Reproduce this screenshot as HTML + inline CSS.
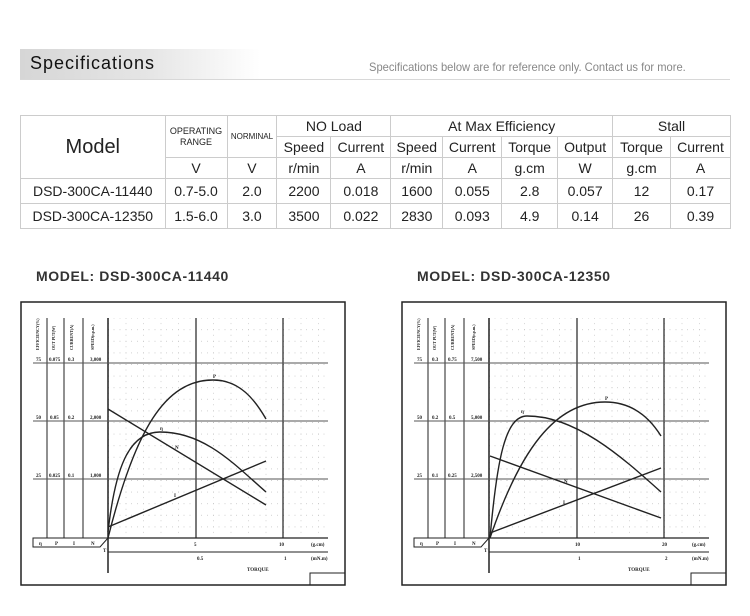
<!DOCTYPE html>
<html><head><meta charset="utf-8">
<style>
*{margin:0;padding:0;box-sizing:border-box}
body{width:750px;height:616px;background:#fff;font-family:"Liberation Sans",Arial,sans-serif;position:relative;overflow:hidden;color:#222}
.bar{position:absolute;left:20px;top:49px;width:240px;height:30px;background:linear-gradient(90deg,#d6d6d6 0%,#e6e6e6 55%,#fff 100%)}
.bar span{position:absolute;left:10px;top:4px;font-size:18px;letter-spacing:1px;color:#111}
.line{position:absolute;left:20px;top:79px;width:710px;height:1px;background:#d8d8d8}
.note{position:absolute;left:369px;top:60px;font-size:12px;color:#888;transform:scaleX(0.93);transform-origin:left}
table{position:absolute;left:20px;top:115px;border-collapse:collapse;width:711px}
td{border:1px solid #ccc;text-align:center;font-size:14px;color:#222;padding:0;height:21px;line-height:19px}
td.sm{font-size:9px;line-height:11px}
tr.d td{height:25px}
.t{position:absolute;font-size:14px;font-weight:bold;color:#333;letter-spacing:0.6px}
svg{position:absolute;left:0;top:0}
</style></head><body>
<div class="bar"><span>Specifications</span></div>
<div class="line"></div>
<div class="note">Specifications below are for reference only. Contact us for more.</div>
<table>
<colgroup><col style="width:145px"><col style="width:62px"><col style="width:50px"><col style="width:54px"><col style="width:60px"><col style="width:52px"><col style="width:59px"><col style="width:56px"><col style="width:55px"><col style="width:58px"><col style="width:60px"></colgroup>
<tr><td rowspan="3" style="font-size:20px">Model</td><td rowspan="2" class="sm">OPERATING<br>RANGE</td><td rowspan="2" class="sm" style="font-size:8px">NORMINAL</td><td colspan="2">NO Load</td><td colspan="4">At Max Efficiency</td><td colspan="2">Stall</td></tr>
<tr><td>Speed</td><td>Current</td><td>Speed</td><td>Current</td><td>Torque</td><td>Output</td><td>Torque</td><td>Current</td></tr>
<tr><td>V</td><td>V</td><td>r/min</td><td>A</td><td>r/min</td><td>A</td><td>g.cm</td><td>W</td><td>g.cm</td><td>A</td></tr>
<tr class="d"><td>DSD-300CA-11440</td><td>0.7-5.0</td><td>2.0</td><td>2200</td><td>0.018</td><td>1600</td><td>0.055</td><td>2.8</td><td>0.057</td><td>12</td><td>0.17</td></tr>
<tr class="d"><td>DSD-300CA-12350</td><td>1.5-6.0</td><td>3.0</td><td>3500</td><td>0.022</td><td>2830</td><td>0.093</td><td>4.9</td><td>0.14</td><td>26</td><td>0.39</td></tr>
</table>
<div class="t" style="left:36px;top:268px">MODEL: DSD-300CA-11440</div>
<div class="t" style="left:417px;top:268px">MODEL: DSD-300CA-12350</div>
<svg width="750" height="616" viewBox="0 0 750 616" font-family="Liberation Serif,serif" font-weight="bold">
<defs>
<pattern id="g" x="108" y="538" width="17.5" height="11.6" patternUnits="userSpaceOnUse">
<circle cx="0.5" cy="0.5" r="0.5" fill="#aaa"/><circle cx="6" cy="0.5" r="0.45" fill="#bbb"/><circle cx="12" cy="0.5" r="0.45" fill="#bbb"/><circle cx="0.5" cy="6" r="0.45" fill="#bbb"/>
</pattern>
<g id="frame" stroke="#222" fill="none">
<rect x="21" y="302" width="324" height="283" stroke-width="1.5"/>
<rect x="310" y="573" width="35" height="12" stroke-width="1"/>
<rect x="108" y="318" width="220" height="220" fill="url(#g)" stroke="none"/>
<line x1="108" y1="318" x2="108" y2="573" stroke-width="1.5"/>
<line x1="47" y1="318" x2="47" y2="538"/><line x1="64" y1="318" x2="64" y2="538"/><line x1="83" y1="318" x2="83" y2="538"/>
<line x1="196" y1="318" x2="196" y2="538" stroke-width="1.2"/><line x1="283" y1="318" x2="283" y2="538" stroke-width="1.2"/>
<line x1="33" y1="363" x2="328" y2="363" stroke="#555"/><line x1="33" y1="421" x2="328" y2="421" stroke="#555"/><line x1="33" y1="479" x2="328" y2="479" stroke="#555"/>
<line x1="108" y1="538" x2="328" y2="538" stroke-width="1.2"/>
<line x1="108" y1="552" x2="328" y2="552"/>
<polyline points="108,538 33,538 33,547 100,547 108,538"/>
</g>
<g id="labels" font-size="5" fill="#222">
<text x="36" y="361">75</text><text x="49" y="361">0.075</text><text x="68" y="361">0.3</text><text x="90" y="361">3,000</text>
<text x="36" y="419">50</text><text x="50" y="419">0.05</text><text x="68" y="419">0.2</text><text x="90" y="419">2,000</text>
<text x="36" y="477">25</text><text x="49" y="477">0.025</text><text x="68" y="477">0.1</text><text x="90" y="477">1,000</text>
<text x="39" y="545">η</text><text x="55" y="545">P</text><text x="73" y="545">I</text><text x="91" y="545">N</text><text x="103" y="552">T</text>
<text x="194" y="546">5</text><text x="279" y="546">10</text><text x="311" y="546">(g.cm)</text>
<text x="197" y="560">0.5</text><text x="284" y="560">1</text><text x="311" y="560">(mN.m)</text>
<text x="247" y="571">TORQUE</text>
<text transform="translate(39,350) rotate(-90)" font-size="4">EFFICIENCY(%)</text>
<text transform="translate(55,350) rotate(-90)" font-size="4">OUT PUT(W)</text>
<text transform="translate(73,350) rotate(-90)" font-size="4">CURRENT(A)</text>
<text transform="translate(94,350) rotate(-90)" font-size="4">SPEED(r.p.m.)</text>
</g>
</defs>
<use href="#frame"/><use href="#labels"/>
<g stroke="#222" stroke-width="1.4" fill="none">
<path d="M108,538 C135,430 165,380 213,380 C240,380 255,400 266,419"/>
<path d="M108,532 C115,470 128,432 160,432 C205,432 235,465 266,492"/>
<line x1="108" y1="409" x2="266" y2="505"/>
<line x1="108" y1="527" x2="266" y2="461"/>
</g>
<g font-size="5" fill="#222"><text x="213" y="378">P</text><text x="160" y="430">η</text><text x="175" y="449">N</text><text x="174" y="497">I</text></g>
<g transform="translate(381,0)">
<use href="#frame"/>
<g font-size="5" fill="#222">
<text x="36" y="361">75</text><text x="51" y="361">0.3</text><text x="67" y="361">0.75</text><text x="90" y="361">7,500</text>
<text x="36" y="419">50</text><text x="51" y="419">0.2</text><text x="68" y="419">0.5</text><text x="90" y="419">5,000</text>
<text x="36" y="477">25</text><text x="51" y="477">0.1</text><text x="67" y="477">0.25</text><text x="90" y="477">2,500</text>
<text x="39" y="545">η</text><text x="55" y="545">P</text><text x="73" y="545">I</text><text x="91" y="545">N</text><text x="103" y="552">T</text>
<text x="194" y="546">10</text><text x="281" y="546">20</text><text x="311" y="546">(g.cm)</text>
<text x="197" y="560">1</text><text x="284" y="560">2</text><text x="311" y="560">(mN.m)</text>
<text x="247" y="571">TORQUE</text>
<text transform="translate(39,350) rotate(-90)" font-size="4">EFFICIENCY(%)</text>
<text transform="translate(55,350) rotate(-90)" font-size="4">OUT PUT(W)</text>
<text transform="translate(73,350) rotate(-90)" font-size="4">CURRENT(A)</text>
<text transform="translate(94,350) rotate(-90)" font-size="4">SPEED(r.p.m.)</text>
<text x="224" y="400">P</text><text x="140" y="413">η</text><text x="183" y="483">N</text><text x="182" y="504">I</text>
</g>
</g>
<g stroke="#222" stroke-width="1.4" fill="none">
<path d="M490,538 C520,450 555,402 605,402 C630,402 648,415 661,436"/>
<path d="M490,538 C497,460 505,416 527,416 C575,416 620,455 661,492"/>
<line x1="490" y1="456" x2="661" y2="518"/>
<line x1="490" y1="533" x2="661" y2="468"/>
</g>
</svg>
</body></html>
